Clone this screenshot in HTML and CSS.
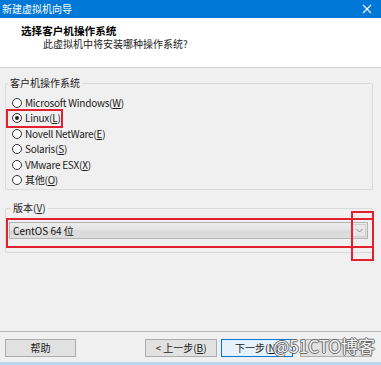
FILE: index.html
```html
<!DOCTYPE html>
<html lang="zh-CN">
<head>
<meta charset="utf-8">
<title>新建虚拟机向导</title>
<link rel="stylesheet" href="styles.css">
</head>
<body>
<div class="window">
  <div class="titlebar">
    <span class="title">新建虚拟机向导</span>
    <svg class="close" width="10" height="10" viewBox="0 0 10 10"><path d="M1 1L9 9M9 1L1 9" stroke="#ffffff" stroke-width="1.1" fill="none"/></svg>
  </div>
  <div class="header">
    <div class="h-title">选择客户机操作系统</div>
    <div class="h-sub">此虚拟机中将安装哪种操作系统?</div>
  </div>
  <div class="main">
    <fieldset class="group g-os">
      <legend>客户机操作系统</legend>
      <div class="radio-row"><span class="radio"></span><span class="label">Microsoft Windows(<u>W</u>)</span></div>
      <div class="radio-row"><span class="radio checked"></span><span class="label">Linux(<u>L</u>)</span><span class="mark mark-linux"></span></div>
      <div class="radio-row"><span class="radio"></span><span class="label">Novell NetWare(<u>E</u>)</span></div>
      <div class="radio-row"><span class="radio"></span><span class="label">Solaris(<u>S</u>)</span></div>
      <div class="radio-row"><span class="radio"></span><span class="label">VMware ESX(<u>X</u>)</span></div>
      <div class="radio-row"><span class="radio"></span><span class="label">其他(<u>O</u>)</span></div>
    </fieldset>
    <fieldset class="group g-ver">
      <legend>版本(<u>V</u>)</legend>
      <div class="select">
        <span class="select-text">CentOS 64 位</span>
        <span class="select-btn"><svg width="7" height="5" viewBox="0 0 7 5"><path d="M0.5 1L3.5 4L6.5 1" stroke="#8a8a8a" stroke-width="1" fill="none"/></svg></span>
        <span class="mark mark-select"></span>
        <span class="mark mark-arrow"></span>
      </div>
    </fieldset>
  </div>
  <div class="footer">
    <button class="btn btn-help">帮助</button>
    <button class="btn btn-back">&lt; 上一步(<u>B</u>)</button>
    <button class="btn btn-next">下一步(<u>N</u>)</button>
    <button class="btn btn-cancel"></button>
    <div class="watermark">@51CTO博客</div>
  </div>
  <div class="edge"></div>
</div>
</body>
</html>
```
FILE: styles.css
```css
html, body {
  margin: 0;
  padding: 0;
}
body {
  width: 381px;
  height: 365px;
  overflow: hidden;
  background: #f0f0f0;
  font-family: "Noto Sans CJK SC", "Noto Sans", sans-serif;
  font-size: 10px;
  color: #1a1a1a;
}
.window {
  display: flex;
  flex-direction: column;
  height: 365px;
}
.titlebar {
  height: 18px;
  background: #0078d7;
  display: flex;
  align-items: center;
  justify-content: space-between;
  padding: 0 9px 0 2px;
  color: #ffffff;
  flex: none;
}
.title {
  font-size: 10px;
  line-height: 18px;
}
.close {
  display: block;
}
.header {
  height: 50px;
  box-sizing: border-box;
  background: #ffffff;
  border-bottom: 1px solid #d2d2d2;
  padding-top: 6px;
  flex: none;
}
.h-title {
  padding-left: 21px;
  font-weight: bold;
  font-size: 10.6px;
  line-height: 14px;
  color: #000;
}
.h-sub {
  padding-left: 43px;
  line-height: 12px;
  color: #222;
}
.main {
  flex: 1;
  display: flex;
  flex-direction: column;
}
.group {
  margin: 0 8px 0 5px;
  padding: 0;
  border: 1px solid #dadada;
  border-radius: 2px;
  min-width: 0;
}
.group legend {
  margin-left: 2px;
  padding: 0 2px;
  line-height: 14px;
  color: #222;
}
.g-os {
  margin-top: 8px;
  padding-top: 5px;
  padding-bottom: 1px;
}
.radio-row {
  position: relative;
  display: flex;
  align-items: center;
  height: 15.5px;
  line-height: 14px;
  color: #1a1a1a;
}
.label {
  letter-spacing: -0.25px;
}
.radio {
  width: 10px;
  height: 10px;
  box-sizing: border-box;
  border: 1px solid #333;
  border-radius: 50%;
  background: #fff;
  margin-left: 6px;
  margin-right: 3px;
  display: flex;
  align-items: center;
  justify-content: center;
}
.radio.checked::after {
  content: "";
  width: 4px;
  height: 4px;
  border-radius: 50%;
  background: #222;
}
.mark {
  position: absolute;
  box-sizing: border-box;
  border: 2px solid #e3202d;
  pointer-events: none;
}
.mark-linux {
  left: 0;
  top: -2px;
  width: 57px;
  height: 19px;
}
.g-ver {
  margin-top: 11px;
  padding: 7px 4px 13px 3px;
}
.select {
  position: relative;
  height: 17px;
  box-sizing: border-box;
  border: 1px solid #b4b4b4;
  background: linear-gradient(#ececec 0%, #e4e4e4 45%, #d9d9d9 55%, #dedede 100%);
  display: flex;
  align-items: center;
}
.select-text {
  flex: 1;
  padding-left: 3px;
  line-height: 15px;
  color: #111;
}
.select-btn {
  width: 14px;
  height: 13px;
  margin-right: 1px;
  background: #e8e8e8;
  border: 1px solid #d0d0d0;
  box-sizing: border-box;
  display: flex;
  align-items: center;
  justify-content: center;
}
.mark-select {
  left: -4px;
  top: -5px;
  width: 368px;
  height: 30px;
}
.mark-arrow {
  left: 341px;
  top: -12px;
  width: 23px;
  height: 50px;
}
.footer {
  position: relative;
  height: 31px;
  box-sizing: border-box;
  border-top: 1px solid #b9b9b9;
  padding: 7px 9px 0 5px;
  display: flex;
  align-items: flex-start;
  flex: none;
}
.btn {
  height: 18px;
  width: 72px;
  box-sizing: border-box;
  border: 1px solid #adadad;
  background: #e1e1e1;
  font-family: "Noto Sans CJK SC", "Noto Sans", sans-serif;
  font-size: 10px;
  color: #1a1a1a;
  padding: 0;
  line-height: 16px;
}
.btn-help {
  width: 71px;
}
.btn-back {
  margin-left: auto;
}
.btn-next {
  margin-left: 4px;
  border-color: #0078d7;
  background: #e5f1fb;
}
.btn-cancel {
  margin-left: 7px;
}
.watermark {
  position: absolute;
  right: 6px;
  top: 3px;
  font-size: 17px;
  line-height: 22px;
  color: #f4f4f4;
  text-shadow: 1px 0 0 #6a6a6a, -1px 0 0 #6a6a6a, 0 1px 0 #6a6a6a, 0 -1px 0 #6a6a6a;
}
.edge {
  height: 3px;
  background: #b9d5ec;
  flex: none;
}
```
